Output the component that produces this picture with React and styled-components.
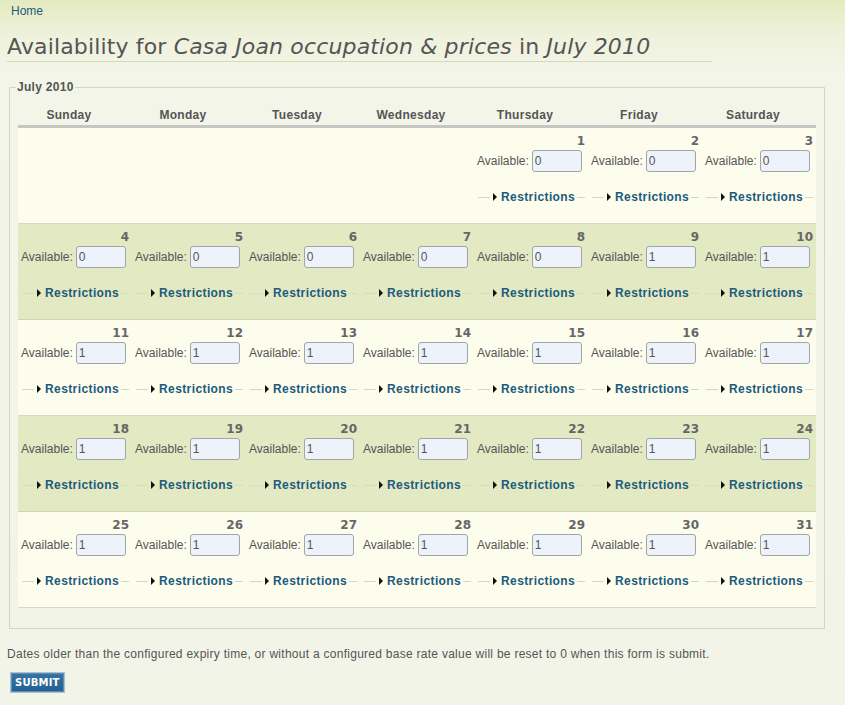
import styled, { createGlobalStyle } from "styled-components";

const GlobalStyle = createGlobalStyle`
  html, body {
    margin: 0;
    padding: 0;
  }
  body {
    background: linear-gradient(#e3eabf 0px, #eef1d9 30px, #f3f5e8 70px, #f3f4e8 100%);
    background-color: #f3f4e8;
    font-family: "Liberation Sans", Arial, sans-serif;
    font-size: 12px;
    color: #555;
    min-height: 705px;
  }
`;

const Page = styled.div`
  padding: 4px 0 0 7px;
  width: 820px;
`;

const HomeLink = styled.a`
  display: block;
  margin-left: 4px;
  line-height: 14px;
  color: #1d5b78;
  text-decoration: none;
  font-size: 12px;
`;

const Title = styled.h1`
  margin: 14px 0 0 0;
  width: 705px;
  font-family: "DejaVu Sans", Verdana, sans-serif;
  font-weight: normal;
  font-size: 22px;
  line-height: 29px;
  letter-spacing: 0.15px;
  color: #555;
  border-bottom: 1px solid #d4d8bc;

  em {
    font-style: italic;
  }
`;

const Fieldset = styled.fieldset`
  margin: 18px 0 0 2px;
  width: 798px;
  padding: 0 8px 20px 8px;
  border: 1px solid #d3d7bd;
`;

const Legend = styled.legend`
  padding: 0 1px;
  margin-left: -2px;
  font-weight: bold;
  font-size: 12px;
  letter-spacing: 0.3px;
  color: #555;
`;

const Grid = styled.div`
  display: grid;
  grid-template-columns: repeat(7, 114px);
  margin-top: 13px;
`;

const HeadCell = styled.div`
  text-align: center;
  font-weight: bold;
  font-size: 12px;
  letter-spacing: 0.3px;
  color: #555;
  line-height: 14px;
  padding: 1px 12px 3px 0;
  border-bottom: 3px solid #c6c6c2;
`;

const Cell = styled.div`
  height: 87px;
  padding: 5px 3px 3px;
  background: ${(p) => (p.$alt ? "#e2e9c3" : "#fdfdee")};
  border-bottom: 1px solid ${(p) => (p.$alt ? "#cfd5b5" : "#d6d8c8")};
  display: flex;
  flex-direction: column;
`;

const DayNum = styled.div`
  height: 16px;
  text-align: right;
  font-family: "DejaVu Sans", sans-serif;
  font-weight: bold;
  font-size: 12px;
  line-height: 16px;
  color: #666;
`;

const AvailRow = styled.div`
  display: flex;
  align-items: center;
  gap: 3px;
  margin-top: 1px;
  height: 22px;
  font-size: 12px;
  color: #555;
`;

const AvailInput = styled.input`
  box-sizing: border-box;
  width: 50px;
  height: 22px;
  padding: 0 2px;
  border: 1px solid #9ea6a6;
  border-radius: 3px;
  background: #eef2fb;
  font-family: "Liberation Sans", Arial, sans-serif;
  font-size: 12px;
  color: #555;
`;

const Restrict = styled.div`
  display: flex;
  align-items: center;
  margin: 17px 0 0 1px;
  height: 16px;
`;

const Line = styled.span`
  height: 1px;
  background: ${(p) => (p.$alt ? "#d6ddb9" : "#d3d5c8")};
  flex: ${(p) => (p.$grow ? "1" : "0 0 12px")};
`;

const RestrictLink = styled.a`
  display: flex;
  align-items: center;
  gap: 4px;
  padding: 0 2px 0 3px;
  font-weight: bold;
  font-size: 12px;
  letter-spacing: 0.4px;
  color: #215a7c;
  text-decoration: none;
`;

const Arrow = styled.span`
  width: 0;
  height: 0;
  border-top: 4px solid transparent;
  border-bottom: 4px solid transparent;
  border-left: 4px solid #111;
`;

const Note = styled.p`
  margin: 18px 0 0 0;
  font-size: 12px;
  line-height: 14px;
  letter-spacing: 0.27px;
  color: #555;
`;

const Submit = styled.button`
  margin: 11px 0 0 3px;
  height: 21px;
  padding: 0 4px;
  border: 1px solid #a9bfd2;
  box-shadow: inset 0 0 0 1px #5f8fb5;
  background: linear-gradient(#3774a4, #22608f);
  color: #fff;
  font-family: "DejaVu Sans", Verdana, sans-serif;
  font-weight: bold;
  font-size: 10px;
  letter-spacing: 0.2px;
`;

const DAYS = ["Sunday", "Monday", "Tuesday", "Wednesday", "Thursday", "Friday", "Saturday"];

const values = {};
for (let d = 1; d <= 31; d++) values[d] = d <= 8 ? "0" : "1";

const cells = [];
for (let i = 0; i < 35; i++) {
  const day = i - 3;
  cells.push(day >= 1 && day <= 31 ? day : null);
}

const DayCell = ({ day, alt }) => (
  <Cell $alt={alt}>
    {day && (
      <>
        <DayNum>{day}</DayNum>
        <AvailRow>
          Available:
          <AvailInput defaultValue={values[day]} />
        </AvailRow>
        <Restrict>
          <Line $alt={alt} />
          <RestrictLink href="#">
            <Arrow />
            Restrictions
          </RestrictLink>
          <Line $alt={alt} $grow />
        </Restrict>
      </>
    )}
  </Cell>
);

export default function App() {
  return (
    <>
      <GlobalStyle />
      <Page>
        <HomeLink href="#">Home</HomeLink>
        <Title>
          Availability for <em>Casa Joan occupation &amp; prices</em> in <em>July 2010</em>
        </Title>
        <Fieldset>
          <Legend>July 2010</Legend>
          <Grid>
            {DAYS.map((d) => (
              <HeadCell key={d}>{d}</HeadCell>
            ))}
            {cells.map((day, i) => (
              <DayCell key={i} day={day} alt={Math.floor(i / 7) % 2 === 1} />
            ))}
          </Grid>
        </Fieldset>
        <Note>
          Dates older than the configured expiry time, or without a configured base rate value will be reset to 0 when this form is submit.
        </Note>
        <Submit>SUBMIT</Submit>
      </Page>
    </>
  );
}
